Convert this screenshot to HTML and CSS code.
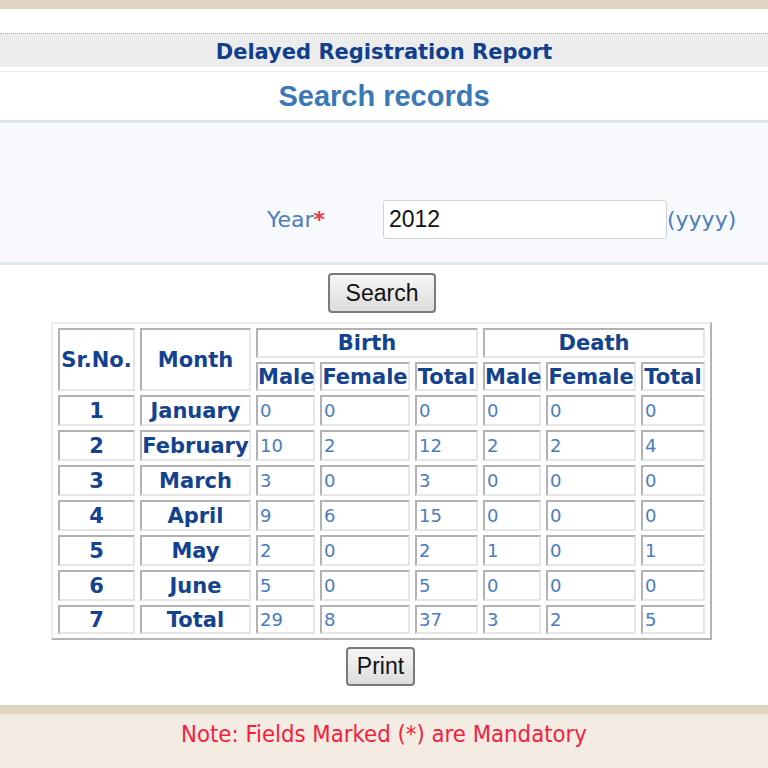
FILE: index.html
```html
<!DOCTYPE html>
<html>
<head>
<meta charset="utf-8">
<link rel="stylesheet" href="styles.css">
</head>
<body>
<div class="topbar"></div>
<div class="page">
  <div class="dotline"></div>
  <div class="report-title">Delayed Registration Report</div>
  <div class="sep-line"></div>
  <div class="search-title">Search records</div>
  <div class="form-area">
    <div class="year-row">
      <label class="year-label">Year<span class="req">*</span></label>
      <input class="year-input" type="text" value="2012">
      <span class="hint">(yyyy)</span>
    </div>
  </div>
  <div class="btn-row search-row"><button class="btn btn-search">Search</button></div>
  <div class="table-wrap">
    <table class="report">
      <colgroup>
        <col class="c-sr"><col class="c-month"><col class="c-male"><col class="c-female"><col class="c-total"><col class="c-male2"><col class="c-female"><col class="c-total2">
      </colgroup>
      <thead>
        <tr class="h1">
          <th rowspan="2">Sr.No.</th>
          <th rowspan="2">Month</th>
          <th colspan="3">Birth</th>
          <th colspan="3">Death</th>
        </tr>
        <tr class="h2">
          <th>Male</th><th>Female</th><th>Total</th>
          <th>Male</th><th>Female</th><th>Total</th>
        </tr>
      </thead>
      <tbody>
        <tr><th>1</th><th>January</th><td>0</td><td>0</td><td>0</td><td>0</td><td>0</td><td>0</td></tr>
        <tr><th>2</th><th>February</th><td>10</td><td>2</td><td>12</td><td>2</td><td>2</td><td>4</td></tr>
        <tr><th>3</th><th>March</th><td>3</td><td>0</td><td>3</td><td>0</td><td>0</td><td>0</td></tr>
        <tr><th>4</th><th>April</th><td>9</td><td>6</td><td>15</td><td>0</td><td>0</td><td>0</td></tr>
        <tr><th>5</th><th>May</th><td>2</td><td>0</td><td>2</td><td>1</td><td>0</td><td>1</td></tr>
        <tr><th>6</th><th>June</th><td>5</td><td>0</td><td>5</td><td>0</td><td>0</td><td>0</td></tr>
        <tr class="last"><th>7</th><th>Total</th><td>29</td><td>8</td><td>37</td><td>3</td><td>2</td><td>5</td></tr>
      </tbody>
    </table>
  </div>
  <div class="btn-row print-row"><button class="btn btn-print">Print</button></div>
</div>
<div class="footer">
  <div class="footer-bar"></div>
  <div class="note">Note: Fields Marked (*) are Mandatory</div>
</div>
</body>
</html>
```
FILE: styles.css
```css
html, body {
  margin: 0;
  padding: 0;
  background: #ffffff;
  font-family: "DejaVu Sans", Verdana, sans-serif;
}
.topbar {
  height: 9px;
  background: #e0d4c2;
}
.page {
  background: #ffffff;
  padding-top: 24px;
}
.dotline {
  height: 0;
  border-top: 1px dotted #a9a9a9;
}
.report-title {
  background: #ececec;
  height: 33px;
  line-height: 36px;
  text-align: center;
  font-weight: bold;
  font-size: 21px;
  color: #0f3f8e;
}
.sep-line {
  margin-top: 4px;
  height: 1px;
  background: #ececec;
}
.search-title {
  height: 48px;
  line-height: 48px;
  text-align: center;
  font-family: "Liberation Sans", Arial, sans-serif;
  font-weight: bold;
  font-size: 29px;
  color: #3a78b7;
}
.form-area {
  border-top: 3px solid #dce6f1;
  border-bottom: 3px solid #dfe7f0;
  background: #f7f9fc;
  height: 145px;
  box-sizing: border-box;
  padding-top: 77px;
}
.year-row {
  display: flex;
  align-items: center;
  margin-left: 267px;
}
.year-label {
  width: 116px;
  font-size: 22px;
  color: #4d7dbd;
}
.req {
  color: #e8334b;
  font-weight: bold;
}
.year-input {
  width: 284px;
  height: 39px;
  box-sizing: border-box;
  border: 1px solid #cfd3d8;
  border-radius: 3px;
  background: #ffffff;
  padding: 0 5px;
  font-family: "Liberation Sans", Arial, sans-serif;
  font-size: 23px;
  color: #111;
  margin: 0;
}
.hint {
  font-size: 22px;
  color: #4d7dbd;
}
.btn-row {
  display: flex;
  justify-content: center;
}
.search-row {
  padding-top: 8px;
}
.btn {
  font-family: "Liberation Sans", Arial, sans-serif;
  font-size: 23px;
  color: #111;
  border: 2px solid #7a7a7a;
  border-radius: 4px;
  background: linear-gradient(#f6f6f6, #e9e9e9 50%, #dcdcdc);
  padding: 0;
  margin: 0;
  box-sizing: border-box;
  height: 40px;
}
.btn-search {
  width: 108px;
  margin-left: -4px;
}
.btn-print {
  width: 69px;
  height: 39px;
  margin-left: -7px;
}
.table-wrap {
  padding-top: 9px;
  padding-left: 51px;
}
.report {
  table-layout: fixed;
  width: 661px;
  border-collapse: separate;
  border-spacing: 5px 4px;
  border-top: 2px solid #ececec;
  border-left: 2px solid #ececec;
  border-right: 2px solid #b4b4b4;
  border-bottom: 2px solid #b4b4b4;
}
.c-sr { width: 77px; }
.c-month { width: 111px; }
.c-male { width: 59px; }
.c-female { width: 90px; }
.c-total { width: 63px; }
.c-male2 { width: 58px; }
.c-total2 { width: 64px; }
.report th, .report td {
  border-top: 2px solid #b2b2b2;
  border-left: 2px solid #b2b2b2;
  border-right: 2px solid #e6e6e6;
  border-bottom: 2px solid #e6e6e6;
  padding: 0;
  white-space: nowrap;
  overflow: visible;
}
.report th {
  font-size: 21px;
  font-weight: bold;
  color: #13428f;
  text-align: center;
}
.report thead tr.h1 th { height: 26px; }
.report thead tr.h2 th { height: 25px; }
.report tbody th, .report tbody td { height: 27px; }
.report tbody tr.last th, .report tbody tr.last td { height: 25px; }
.report td {
  font-size: 18px;
  color: #4a7dc0;
  text-align: left;
  padding-left: 2px;
}
.print-row {
  padding-top: 7px;
  padding-bottom: 19px;
}
.footer {
  background: #f4ece2;
  height: 80px;
}
.footer-bar {
  height: 9px;
  background: #e0d4c2;
}
.note {
  text-align: center;
  font-family: "DejaVu Sans Condensed", "DejaVu Sans", sans-serif;
  font-stretch: condensed;
  font-size: 23.7px;
  color: #f5203d;
  padding-top: 6px;
}
```
